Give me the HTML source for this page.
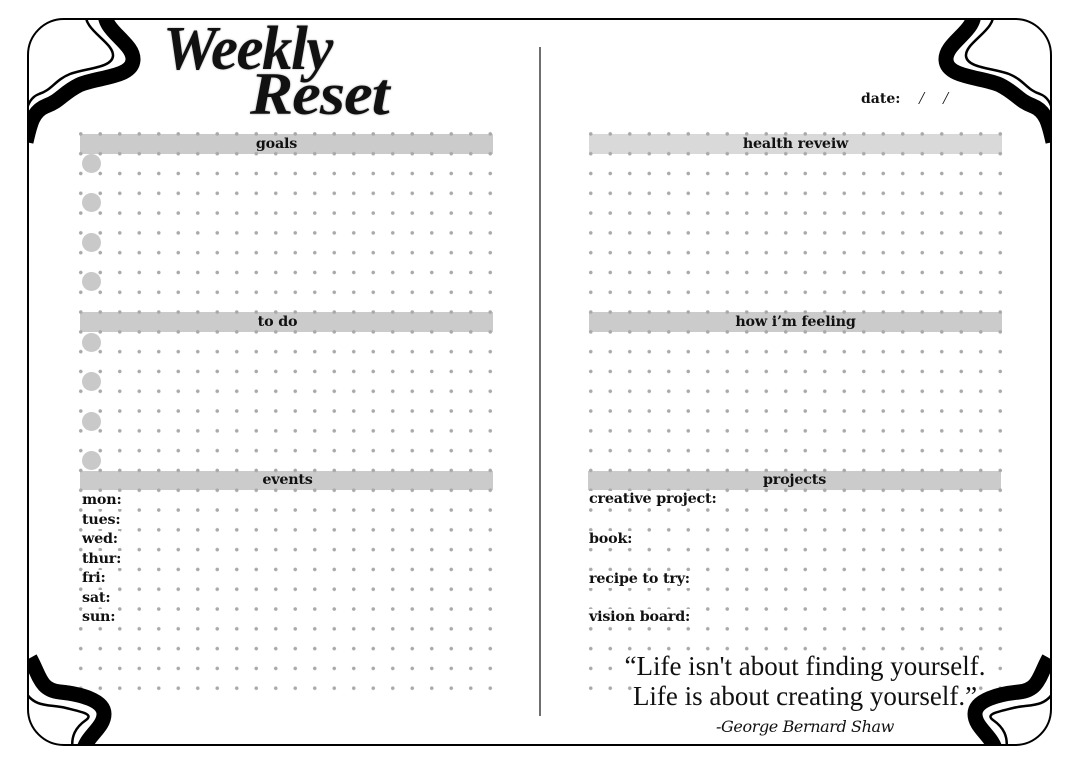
<!DOCTYPE html>
<html><head><meta charset="utf-8"><style>
*{margin:0;padding:0;box-sizing:border-box}
body{width:1084px;height:766px;background:#fff;position:relative;overflow:hidden;font-family:"Liberation Serif",Georgia,serif;color:#111}
.abs{position:absolute}
.bar{position:absolute;height:19.8px;background:#cbcbcb}
.dots{position:absolute;background-image:radial-gradient(circle,#a9a9a9 1.5px,transparent 2.1px);background-size:19.5px 19.8px}
.hd{position:absolute;font-family:"DejaVu Serif",serif;font-weight:bold;font-size:14.3px;text-align:center;line-height:20px;z-index:3;letter-spacing:-0.2px}
.c{position:absolute;width:19px;height:19px;border-radius:50%;background:#c9c9c9;z-index:2}
.lbl{position:absolute;font-family:"DejaVu Serif",serif;font-weight:bold;font-size:14.3px;line-height:17px;background:#fff;z-index:3;padding-right:2px;letter-spacing:-0.2px}
.title{position:absolute;font-weight:bold;font-style:italic;z-index:3;transform-origin:left bottom;text-shadow:0 0 2px rgba(0,0,0,.35)}
</style></head><body>

<div class="bar" style="left:80px;top:134px;width:413px"></div>
<div class="bar" style="left:80px;top:312px;width:413px"></div>
<div class="bar" style="left:80px;top:470.6px;width:413px"></div>
<div class="bar" style="left:589px;top:134px;width:413px;background:#d9d9d9"></div>
<div class="bar" style="left:589px;top:312px;width:413px"></div>
<div class="bar" style="left:588px;top:470.6px;width:413px"></div>

<div class="dots" style="left:71.25px;top:124.1px;width:429px;height:574.2px"></div>
<div class="dots" style="left:580.75px;top:124.1px;width:429px;height:574.2px"></div>

<div class="c" style="left:82px;top:153.5px"></div>
<div class="c" style="left:82px;top:193px"></div>
<div class="c" style="left:82px;top:232.7px"></div>
<div class="c" style="left:82px;top:272.3px"></div>
<div class="c" style="left:82px;top:332.5px"></div>
<div class="c" style="left:82px;top:372px"></div>
<div class="c" style="left:82px;top:411.5px"></div>
<div class="c" style="left:82px;top:451px"></div>

<div class="hd" style="left:80px;top:134px;width:393px">goals</div>
<div class="hd" style="left:80px;top:312px;width:395px">to do</div>
<div class="hd" style="left:80px;top:470px;width:415px">events</div>
<div class="hd" style="left:589px;top:134px;width:413px">health reveiw</div>
<div class="hd" style="left:589px;top:312px;width:413px">how i’m feeling</div>
<div class="hd" style="left:588px;top:470px;width:413px">projects</div>

<div class="lbl" style="left:82px;top:492px">mon:</div>
<div class="lbl" style="left:82px;top:511.5px">tues:</div>
<div class="lbl" style="left:82px;top:531px">wed:</div>
<div class="lbl" style="left:82px;top:550.5px">thur:</div>
<div class="lbl" style="left:82px;top:570px">fri:</div>
<div class="lbl" style="left:82px;top:589.5px">sat:</div>
<div class="lbl" style="left:82px;top:609px">sun:</div>

<div class="lbl" style="left:589px;top:491px">creative project:</div>
<div class="lbl" style="left:589px;top:531px">book:</div>
<div class="lbl" style="left:589px;top:571px">recipe to try:</div>
<div class="lbl" style="left:589px;top:609px">vision board:</div>

<div class="abs" style="left:600px;top:651px;width:410px;text-align:center;font-size:27px;line-height:30px;z-index:3;font-family:'Liberation Serif',serif">
<span style="background:#fff">“Life isn't about finding yourself.</span><br><span style="background:#fff">Life is about creating yourself.”</span></div>
<div class="abs" style="left:600px;top:717px;width:410px;text-align:center;font-size:16px;font-style:italic;z-index:3;font-family:'DejaVu Serif','Liberation Serif',serif;letter-spacing:-0.4px">-George Bernard Shaw</div>

<div class="abs" style="left:861px;top:91px;font-family:'DejaVu Serif',serif;font-weight:bold;font-size:14px;z-index:3">date:</div>
<div class="abs" style="left:919px;top:88px;font-size:18px;font-style:italic;z-index:3">/</div>
<div class="abs" style="left:943px;top:88px;font-size:18px;font-style:italic;z-index:3">/</div>

<div class="title" style="left:163px;top:18px;font-size:62px;line-height:62px;transform:scaleX(0.98);letter-spacing:-1.5px">Weekly</div>
<div class="title" style="left:250px;top:64px;font-size:60px;line-height:60px;transform:scaleX(1.08);letter-spacing:-1px">Reset</div>

<div class="abs" style="left:539px;top:47px;width:2px;height:669px;background:#6f6f6f"></div>

<svg class="abs" style="left:0;top:0;z-index:4" width="1084" height="766" viewBox="0 0 1084 766">
<defs><clipPath id="fr"><rect x="28" y="19" width="1023" height="726" rx="36" ry="36"/></clipPath></defs>
<g clip-path="url(#fr)">
<g fill="none" stroke="#000">
<path d="M106,10 C100,30 134,42 133,60 C132,78 96,77 79,85 C63,93 60,101 46,106 C33,111 30,124 26,142" stroke-width="15"/>
<path d="M86,12 C82,30 114,42 113,56 C112,68 86,68 70,74 C55,80 52,90 39,94 C31,97 28,104 26,112" stroke-width="2.5"/>
</g>
<g transform="translate(1079,0) scale(-1,1)" fill="none" stroke="#000">
<path d="M106,10 C100,30 134,42 133,60 C132,78 96,77 79,85 C63,93 60,101 46,106 C33,111 30,124 26,142" stroke-width="15"/>
<path d="M86,12 C82,30 114,42 113,56 C112,68 86,68 70,74 C55,80 52,90 39,94 C31,97 28,104 26,112" stroke-width="2.5"/>
</g>
<g fill="none" stroke="#000">
<path d="M30,658 C40,676 40,690 60,692 C80,694 104,700 104,714 C104,728 86,736 83,752" stroke-width="15"/>
<path d="M26,693 C36,708 50,704 66,708 C82,712 94,714 86,720 C76,727 70,736 73,752" stroke-width="2.5"/>
</g>
<g transform="translate(1079,0) scale(-1,1)" fill="none" stroke="#000">
<path d="M30,658 C40,676 40,690 60,692 C80,694 104,700 104,714 C104,728 86,736 83,752" stroke-width="15"/>
<path d="M26,693 C36,708 50,704 66,708 C82,712 94,714 86,720 C76,727 70,736 73,752" stroke-width="2.5"/>
</g>
</g>
<rect x="28" y="19" width="1023" height="726" rx="36" ry="36" fill="none" stroke="#000" stroke-width="2"/>
</svg>
</body></html>
